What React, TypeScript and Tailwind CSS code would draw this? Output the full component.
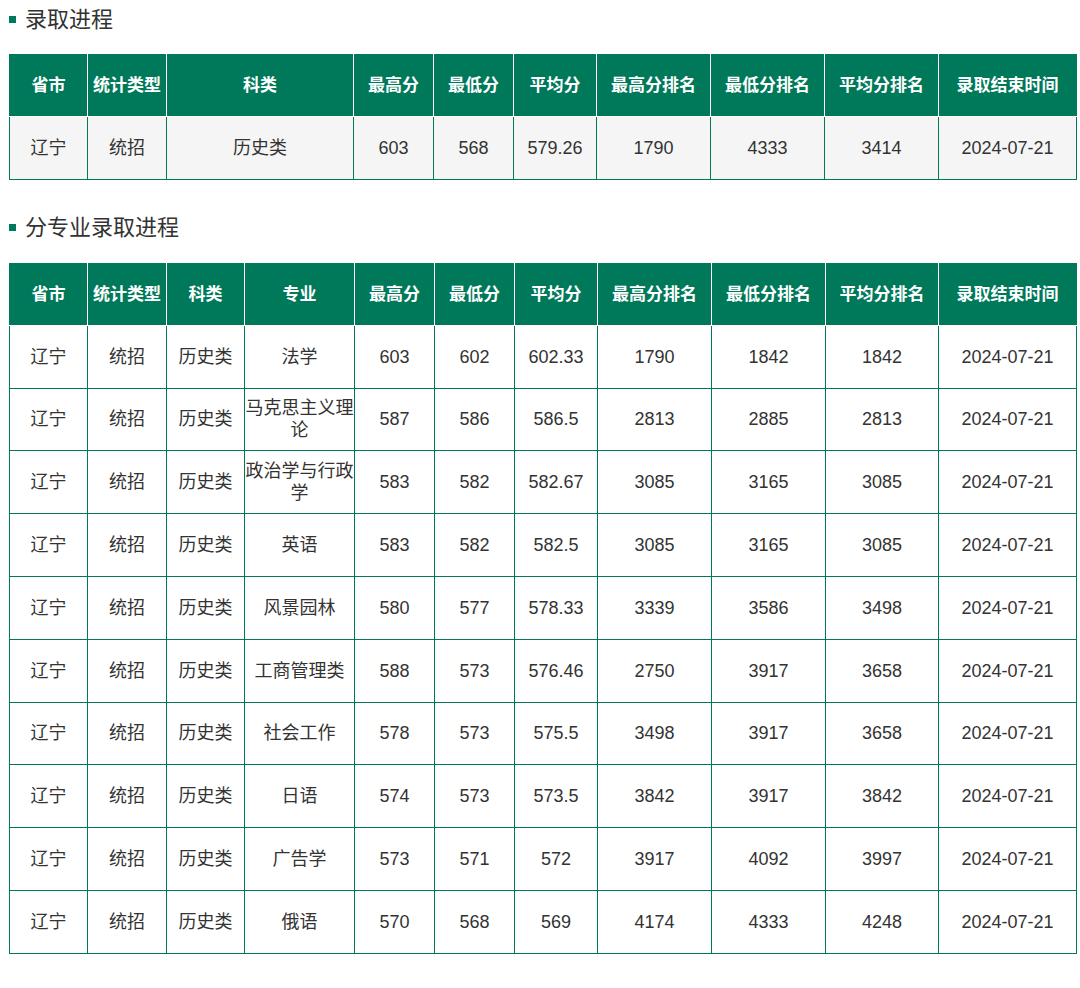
import React from 'react';

const GREEN = 'bg-[#00795a]';

type Row = string[];

const summaryHead = ['省市', '统计类型', '科类', '最高分', '最低分', '平均分', '最高分排名', '最低分排名', '平均分排名', '录取结束时间'];
const summaryWidths = [78, 79, 187, 80, 80, 83, 114, 114, 114, 138];
const summaryRows: Row[] = [['辽宁', '统招', '历史类', '603', '568', '579.26', '1790', '4333', '3414', '2024-07-21']];

const majorHead = ['省市', '统计类型', '科类', '专业', '最高分', '最低分', '平均分', '最高分排名', '最低分排名', '平均分排名', '录取结束时间'];
const majorWidths = [78, 79, 78, 110, 80, 80, 83, 114, 114, 113, 138];
const majors: Row[] = [
  ['法学', '603', '602', '602.33', '1790', '1842', '1842'],
  ['马克思主义理论', '587', '586', '586.5', '2813', '2885', '2813'],
  ['政治学与行政学', '583', '582', '582.67', '3085', '3165', '3085'],
  ['英语', '583', '582', '582.5', '3085', '3165', '3085'],
  ['风景园林', '580', '577', '578.33', '3339', '3586', '3498'],
  ['工商管理类', '588', '573', '576.46', '2750', '3917', '3658'],
  ['社会工作', '578', '573', '575.5', '3498', '3917', '3658'],
  ['日语', '574', '573', '573.5', '3842', '3917', '3842'],
  ['广告学', '573', '571', '572', '3917', '4092', '3997'],
  ['俄语', '570', '568', '569', '4174', '4333', '4248'],
].map((r) => ['辽宁', '统招', '历史类', ...r, '2024-07-21']);

function Heading({ children }: { children: React.ReactNode }) {
  return (
    <h2 className="flex items-center h-[38px] text-[22px] text-[#333] font-normal">
      <span className={`w-[7px] h-[7px] ${GREEN} mr-[9px]`} />
      {children}
    </h2>
  );
}

function DataTable({ head, widths, rows, shaded }: { head: string[]; widths: number[]; rows: Row[]; shaded?: boolean }) {
  return (
    <table className="table-fixed border-collapse w-[1067px] border border-[#00795a]">
      <colgroup>
        {widths.map((w, i) => (
          <col key={i} style={{ width: w }} />
        ))}
      </colgroup>
      <thead>
        <tr>
          {head.map((h, i) => (
            <th
              key={i}
              className={`${GREEN} h-[62px] px-0 text-white text-[17px] font-bold border-r border-b border-white last:border-r-0`}
            >
              {h}
            </th>
          ))}
        </tr>
      </thead>
      <tbody>
        {rows.map((r, ri) => (
          <tr key={ri} className={shaded ? 'bg-[#f5f5f5]' : 'bg-white'}>
            {r.map((c, ci) => (
              <td
                key={ci}
                className="h-[62.8px] px-0 text-center text-[18px] leading-[22px] text-[#333] border border-[#00795a]"
              >
                {c}
              </td>
            ))}
          </tr>
        ))}
      </tbody>
    </table>
  );
}

export default function App() {
  return (
    <div className="bg-white min-h-[988px] px-[9px] font-['Liberation_Sans','Microsoft_YaHei','Noto_Sans_CJK_SC',sans-serif]">
      <Heading>录取进程</Heading>
      <div className="mt-[16px]">
        <DataTable head={summaryHead} widths={summaryWidths} rows={summaryRows} shaded />
      </div>
      <div className="mt-[29px]">
        <Heading>分专业录取进程</Heading>
      </div>
      <div className="mt-[16px]">
        <DataTable head={majorHead} widths={majorWidths} rows={majors} />
      </div>
    </div>
  );
}
